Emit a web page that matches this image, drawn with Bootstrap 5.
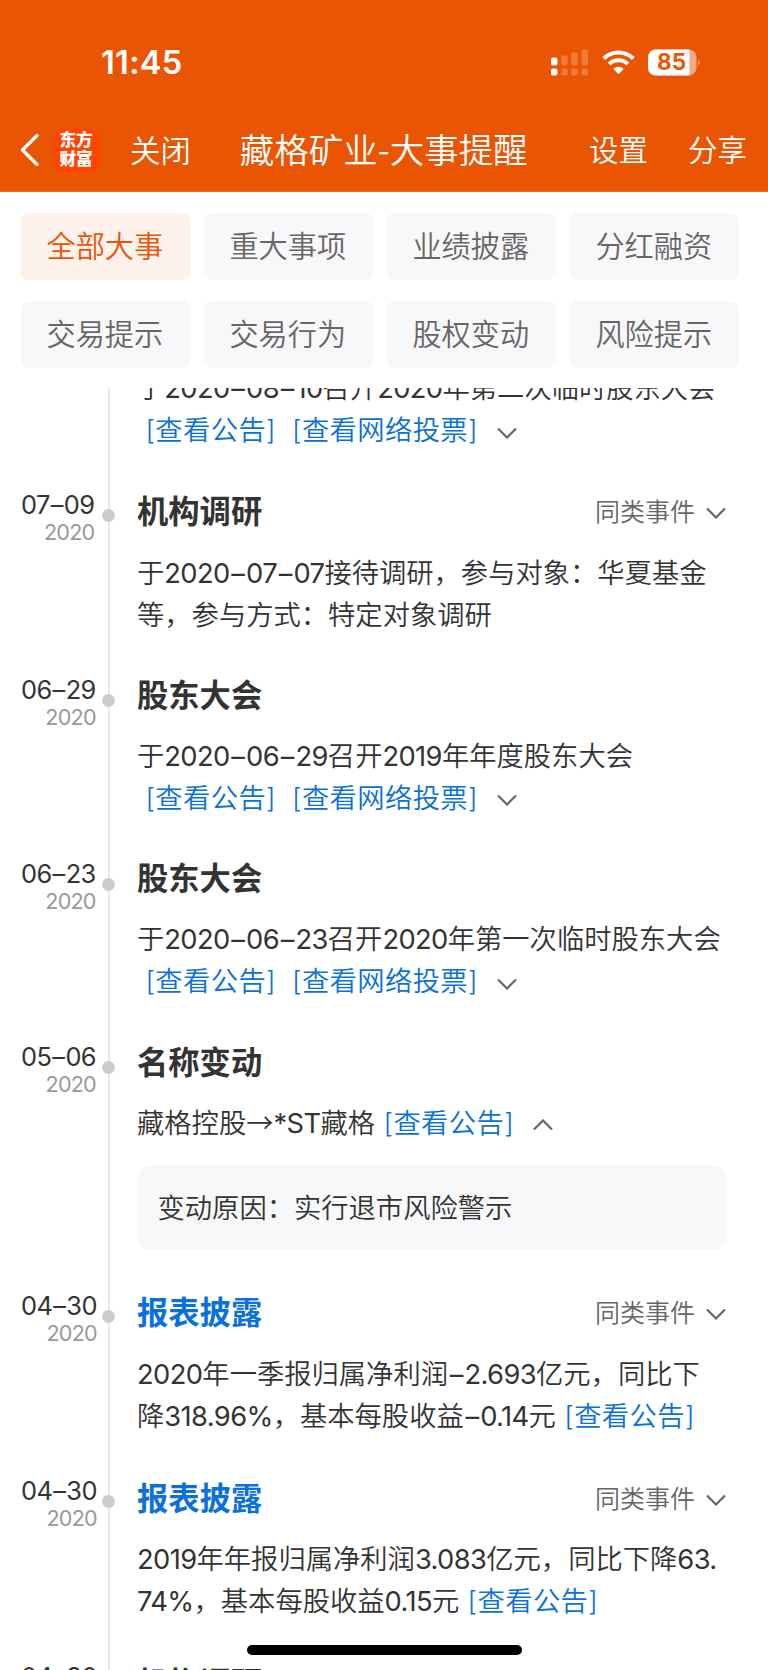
<!DOCTYPE html>
<html lang="zh-CN">
<head>
<meta charset="utf-8">
<meta name="viewport" content="width=device-width, initial-scale=1">
<title>藏格矿业-大事提醒</title>
<link href="https://cdn.jsdelivr.net/npm/bootstrap@5.3.0/dist/css/bootstrap.min.css" rel="stylesheet">
<style>
body{font-family:Inter,"Noto Sans CJK SC",sans-serif;font-weight:350;color:#333;background:#fff;width:768px;height:1670px;overflow:hidden;line-height:1}
.app-head{background:#ea5504;height:192px;border-bottom:1px solid #f26a22;color:#fff;flex:none}
.status-row{height:125px;padding:0 67px 0 101px}
.clock{font-size:32.6px;font-weight:600;letter-spacing:.3px}
.nav-row{height:48px;padding:0 21px 0 20px;font-family:"Noto Sans CJK SC",sans-serif;font-weight:350;white-space:nowrap}
.brand-tile{width:45px;height:45px;border-radius:10px;background:#ff4500;font-weight:900;font-size:16.6px;line-height:19px;margin-left:14.5px;padding-bottom:3px;position:relative;top:1px}
.head-title{font-size:34.5px;margin-left:49px;padding-bottom:2px}
.head-act{font-size:29.5px}
.head-act.close-act{font-size:30.4px;margin-left:31.5px}
.tag-grid{display:grid;grid-template-columns:repeat(4,1fr);column-gap:14.3px;row-gap:21.3px;padding:21px 29.4px 20.6px 21px;flex:none}
.tag{height:66.7px;border:0;border-radius:7px;background:#f8f8fa;color:#666;font:350 29.2px "Noto Sans CJK SC",sans-serif;padding:0 1px 4px 0;white-space:nowrap}
.tag.on{background:#fdf1eb;color:#ea5504}
.feed{position:relative;overflow:hidden;flex:1;min-height:0}
.feed::before{content:"";position:absolute;left:108.3px;top:0;bottom:0;width:1.7px;background:#e9e9e9}
.event{display:grid;grid-template-columns:102px 13px 1fr;padding-bottom:44.4px;position:relative}
.event.clipped{margin-top:-20px;padding-bottom:42.7px}
.when{padding-left:21px}
.when>div{width:max-content;text-align:right}
.day{font-size:25.4px;font-weight:400;line-height:27px;letter-spacing:-.6px;margin-top:-4.5px}
.yr{font-size:21.6px;font-weight:400;line-height:28px;color:#999;letter-spacing:-.8px}
.dot{width:13px;height:13px;border-radius:50%;background:#ccc;margin-top:13.5px}
.what{padding-left:22px;padding-right:42px}
.ttl{height:28px;font:700 31.3px/26px "Noto Sans CJK SC",sans-serif;margin:0 0 26.7px}
.more{color:#666;font:350 25px/27px "Noto Sans CJK SC",sans-serif}
.more .chev{margin-left:11px;vertical-align:2px}
.has-more{padding-top:2px;margin-bottom:-1px}
.has-more .ttl{margin-bottom:27.7px}
.txt{font-size:27.3px;line-height:42.2px;white-space:nowrap;margin:0}
.txt i{font-style:normal;font-weight:400;letter-spacing:-.6px}
.dash{padding:0 1.7px}
.day .dash{padding:0 1px}
.txt a,.ttl.link{color:#0a70dc;text-decoration:none}
.txt a{letter-spacing:.4px}
.cjk{font-family:"Noto Sans CJK SC",sans-serif;line-height:0}
.ind{margin-left:8.4px}
.gap-l{margin-left:16px}
.chev{width:20px;height:12px;fill:none;stroke:#666;stroke-width:2.2}
.txt .chev{margin-left:19px;vertical-align:1.5px}
.reason{background:#f7f8fa;border-radius:14px;height:85.7px;margin:20px 0 1.3px;padding:4px 20.5px 0}
.home-bar{position:absolute;left:247px;top:1644.5px;width:275px;height:10px;border-radius:5px;background:#000}
</style>
</head>
<body class="d-flex flex-column position-relative">
<header class="app-head">
  <div class="status-row d-flex align-items-center">
    <span class="clock">11:45</span>
    <svg class="ms-auto" width="150" height="28" viewBox="0 0 150 28" aria-hidden="true">
      <g fill="#fff"><rect x="0" y="8.500" width="6.500" height="8" rx="2"/><rect x="0" y="19.500" width="6.500" height="7" rx="2"/></g>
      <g fill="#fff" opacity=".22"><rect x="10.300" y="6.500" width="6.500" height="10" rx="2"/><rect x="20.300" y="3.500" width="6.500" height="13" rx="2"/><rect x="30.500" y="0.500" width="6.500" height="16" rx="2"/><rect x="10.300" y="19.500" width="6.500" height="7" rx="2"/><rect x="20.300" y="19.500" width="6.500" height="7" rx="2"/><rect x="30.500" y="19.500" width="6.500" height="7" rx="2"/></g>
      <g fill="none" stroke="#fff" stroke-width="4"><path d="M52.700 9.500a21 21 0 0 1 29.600 0"/><path d="M58.200 15.200a13.200 13.200 0 0 1 18.600 0"/></g>
      <path fill="#fff" d="M62.300 20a7.300 7.300 0 0 1 10.400 0l-4.500 4.600q-.7.700-1.400 0z"/>
      <clipPath id="bat"><rect x="97" y=".5" width="48.500" height="26" rx="8"/></clipPath>
      <g clip-path="url(#bat)"><rect x="97" y="0" width="49" height="27" fill="#fff" opacity=".5"/><rect x="97" y="0" width="41.500" height="27" fill="#fff"/></g>
      <path d="M147.300 10q2.700 3.500 0 7z" fill="#fff" opacity=".5"/>
      <text x="120.500" y="21.300" text-anchor="middle" font-family="Inter" font-weight="700" font-size="22.500" fill="#ea5504">85</text>
    </svg>
  </div>
  <div class="nav-row d-flex align-items-center">
    <svg width="19" height="34" viewBox="0 0 19 34" fill="none" stroke="#fff" stroke-width="3.400" stroke-linecap="round" stroke-linejoin="round"><path d="M17 3.500 2.500 18 17 32.500"/></svg>
    <span class="brand-tile d-flex flex-column align-items-center justify-content-center"><span>东方</span><span>财富</span></span>
    <span class="head-act close-act">关闭</span>
    <span class="head-title">藏格矿业-大事提醒</span>
    <span class="head-act ms-auto">设置</span>
    <span class="head-act" style="margin-left:40px">分享</span>
  </div>
</header>

<nav class="tag-grid">
  <button class="tag on">全部大事</button><button class="tag">重大事项</button><button class="tag">业绩披露</button><button class="tag">分红融资</button>
  <button class="tag">交易提示</button><button class="tag">交易行为</button><button class="tag">股权变动</button><button class="tag">风险提示</button>
</nav>

<main class="feed">
  <article class="event clipped">
    <div></div><div></div>
    <div class="what">
      <p class="txt">于<i>2020<span class="dash">–</span>08<span class="dash">–</span>10</i>召开<i>2020</i>年第二次临时股东大会<br><a class="ind" href="#">[查看公告]</a><a class="gap-l" href="#">[查看网络投票]</a><svg class="chev" viewBox="0 0 20 12"><path d="M1 1.500 10 10.500 19 1.500"/></svg></p>
    </div>
  </article>

  <article class="event">
    <div class="when"><div><div class="day">07<span class="dash">–</span>09</div><div class="yr">2020</div></div></div><span class="dot"></span>
    <div class="what has-more">
      <div class="d-flex justify-content-between"><h2 class="ttl">机构调研</h2><span class="more">同类事件<svg class="chev" viewBox="0 0 20 12"><path d="M1 1.500 10 10.500 19 1.500"/></svg></span></div>
      <p class="txt">于<i>2020<span class="dash">–</span>07<span class="dash">–</span>07</i>接待调研，参与对象：华夏基金<br>等，参与方式：特定对象调研</p>
    </div>
  </article>

  <article class="event">
    <div class="when"><div><div class="day">06<span class="dash">–</span>29</div><div class="yr">2020</div></div></div><span class="dot"></span>
    <div class="what">
      <h2 class="ttl">股东大会</h2>
      <p class="txt">于<i>2020<span class="dash">–</span>06<span class="dash">–</span>29</i>召开<i>2019</i>年年度股东大会<br><a class="ind" href="#">[查看公告]</a><a class="gap-l" href="#">[查看网络投票]</a><svg class="chev" viewBox="0 0 20 12"><path d="M1 1.500 10 10.500 19 1.500"/></svg></p>
    </div>
  </article>

  <article class="event">
    <div class="when"><div><div class="day">06<span class="dash">–</span>23</div><div class="yr">2020</div></div></div><span class="dot"></span>
    <div class="what">
      <h2 class="ttl">股东大会</h2>
      <p class="txt">于<i>2020<span class="dash">–</span>06<span class="dash">–</span>23</i>召开<i>2020</i>年第一次临时股东大会<br><a class="ind" href="#">[查看公告]</a><a class="gap-l" href="#">[查看网络投票]</a><svg class="chev" viewBox="0 0 20 12"><path d="M1 1.500 10 10.500 19 1.500"/></svg></p>
    </div>
  </article>

  <article class="event">
    <div class="when"><div><div class="day">05<span class="dash">–</span>06</div><div class="yr">2020</div></div></div><span class="dot"></span>
    <div class="what">
      <h2 class="ttl">名称变动</h2>
      <p class="txt">藏格控股<span class="cjk">→</span><i>*ST</i>藏格<a class="ind" href="#">[查看公告]</a><svg class="chev" viewBox="0 0 20 12"><path d="M1 10.500 10 1.500 19 10.500"/></svg></p>
      <div class="reason d-flex align-items-center"><p class="txt">变动原因：实行退市风险警示</p></div>
    </div>
  </article>

  <article class="event">
    <div class="when"><div><div class="day">04<span class="dash">–</span>30</div><div class="yr">2020</div></div></div><span class="dot"></span>
    <div class="what has-more">
      <div class="d-flex justify-content-between"><h2 class="ttl link">报表披露</h2><span class="more">同类事件<svg class="chev" viewBox="0 0 20 12"><path d="M1 1.500 10 10.500 19 1.500"/></svg></span></div>
      <p class="txt"><i>2020</i>年一季报归属净利润<i><span class="dash">–</span>2.693</i>亿元，同比下<br>降<i>318.96%</i>，基本每股收益<i><span class="dash">–</span>0.14</i>元<a class="ind" href="#">[查看公告]</a></p>
    </div>
  </article>

  <article class="event">
    <div class="when"><div><div class="day">04<span class="dash">–</span>30</div><div class="yr">2020</div></div></div><span class="dot"></span>
    <div class="what has-more">
      <div class="d-flex justify-content-between"><h2 class="ttl link">报表披露</h2><span class="more">同类事件<svg class="chev" viewBox="0 0 20 12"><path d="M1 1.500 10 10.500 19 1.500"/></svg></span></div>
      <p class="txt"><i>2019</i>年年报归属净利润<i>3.083</i>亿元，同比下降<i>63.</i><br><i>74%</i>，基本每股收益<i>0.15</i>元<a class="ind" href="#">[查看公告]</a></p>
    </div>
  </article>

  <article class="event">
    <div class="when"><div><div class="day">04<span class="dash">–</span>30</div><div class="yr">2020</div></div></div><span class="dot"></span>
    <div class="what has-more"><h2 class="ttl">机构调研</h2></div>
  </article>
</main>
<div class="home-bar"></div>
<script src="https://cdn.jsdelivr.net/npm/bootstrap@5.3.0/dist/js/bootstrap.bundle.min.js"></script>
</body>
</html>
